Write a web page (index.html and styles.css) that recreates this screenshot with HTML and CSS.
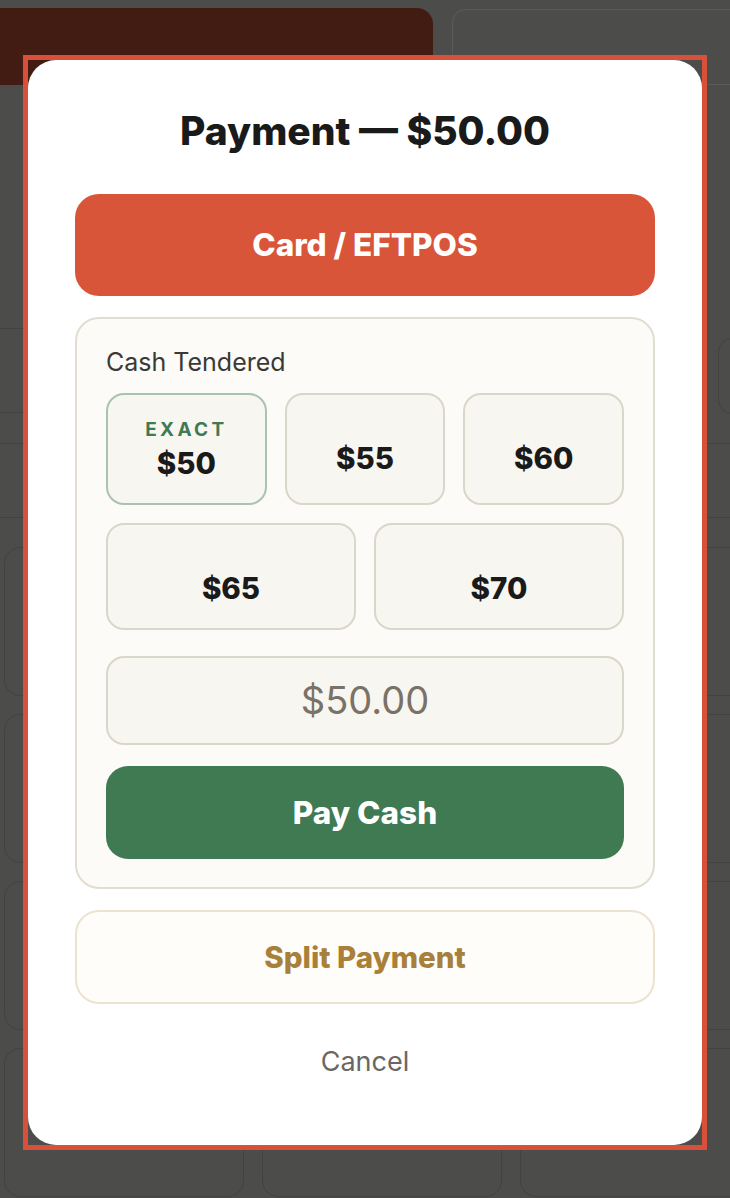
FILE: index.html
```html
<!DOCTYPE html>
<html lang="en">
<head>
  <meta charset="UTF-8">
  <title>POS - Payment</title>
  <link rel="stylesheet" href="styles.css">
</head>
<body>

  <div class="page">
    <div class="header">
      <div class="tab active"></div>
      <div class="tab"></div>
    </div>

    <div class="search-row">
      <div class="search"></div>
      <div class="pill"></div>
    </div>

    <div class="strip"></div>

    <div class="products">
      <div class="product"></div><div class="product"></div><div class="product"></div>
      <div class="product"></div><div class="product"></div><div class="product"></div>
      <div class="product"></div><div class="product"></div><div class="product"></div>
      <div class="product"></div><div class="product"></div><div class="product"></div>
    </div>
  </div>

  <div class="overlay">
    <div class="frame">
      <div class="modal">
        <h2>Payment — $50.00</h2>

        <button class="btn card">Card / EFTPOS</button>

        <div class="cash">
          <div class="cash-label">Cash Tendered</div>

          <div class="tenders three">
            <button class="tender exact"><span class="tag">EXACT</span><span class="amt">$50</span></button>
            <button class="tender"><span class="tag"></span><span class="amt">$55</span></button>
            <button class="tender"><span class="tag"></span><span class="amt">$60</span></button>
          </div>

          <div class="tenders two">
            <button class="tender"><span class="tag"></span><span class="amt">$65</span></button>
            <button class="tender"><span class="tag"></span><span class="amt">$70</span></button>
          </div>

          <input class="cash-input" type="text" placeholder="$50.00">

          <button class="btn pay">Pay Cash</button>
        </div>

        <button class="btn split">Split Payment</button>

        <button class="cancel">Cancel</button>
      </div>
    </div>
  </div>

</body>
</html>
```

FILE: styles.css
```css
body {
  margin: 0;
  background: #4c4c4a;
  font-family: Inter, "Liberation Sans", sans-serif;
  overflow: hidden;
  height: 1198px;
}

/* page behind the dialog (dimmed) */

.page {
  height: 1198px;
  overflow: hidden;
}

.header {
  display: flex;
  gap: 19px;
  padding-top: 8px;
  height: 77px;
}

.tab {
  flex: 1;
  margin-top: 1px;
  border: 1.5px solid #5a5a58;
  border-right: none;
  border-radius: 14px 0 0 0;
}

.tab.active {
  flex: none;
  width: 433px;
  margin-top: 0;
  border: none;
  border-radius: 0 16px 0 0;
  background: #421b13;
}

.search-row {
  display: flex;
  gap: 12px;
  margin-top: 243px;
  height: 85px;
}

.search {
  flex: 1;
  margin-left: -20px;
  border: 1.5px solid #424240;
  border-radius: 14px;
}

.pill {
  width: 100px;
  margin-top: 10px;
  height: 74px;
  border: 1.5px solid #424240;
  border-radius: 14px;
  margin-right: -90px;
}

.strip {
  margin-top: 30px;
  height: 73px;
  border-top: 1.5px solid #424240;
  border-bottom: 1.5px solid #424240;
}

.products {
  display: grid;
  grid-template-columns: repeat(3, 240px);
  gap: 18px;
  margin-top: 29px;
  padding-left: 4px;
}

.product {
  height: 147px;
  border: 1.5px solid #424240;
  border-radius: 16px;
}

/* dialog */

.overlay {
  position: fixed;
  inset: 0;
  display: flex;
  align-items: center;
  justify-content: center;
  padding-top: 6px;
}

.frame {
  border: 5px solid #d9503a;
}

.modal {
  width: 580px;
  padding: 49px 47px 67px;
  background: #fff;
  border-radius: 28px;
  display: flex;
  flex-direction: column;
}

.modal h2 {
  margin: 0 0 41px;
  font-size: 39px;
  line-height: 44px;
  font-weight: 800;
  color: #1a1a1a;
  text-align: center;
}

button {
  font-family: inherit;
  cursor: pointer;
}

.btn {
  width: 100%;
  border: none;
  border-radius: 24px;
  font-weight: 800;
}

.btn.card {
  height: 102px;
  background: #d9553a;
  color: #fff;
  font-size: 31.5px;
}

.cash {
  margin-top: 21px;
  padding: 28px 29px;
  background: #fcfbf7;
  border: 2px solid #e2ddd1;
  border-radius: 24px;
}

.cash-label {
  font-size: 25px;
  line-height: 30px;
  color: #3b3936;
  margin-bottom: 16px;
}

.tenders {
  display: grid;
  gap: 18px;
}

.tenders.three {
  grid-template-columns: repeat(3, 1fr);
  margin-bottom: 18px;
}

.tenders.two {
  grid-template-columns: repeat(2, 1fr);
  margin-bottom: 26px;
}

.tender {
  display: flex;
  flex-direction: column;
  align-items: center;
  padding: 24px 0 23px;
  background: #f8f6f1;
  border: 2px solid #dbd6ca;
  border-radius: 18px;
}

.tender.exact {
  border-color: #aac2b0;
}

.tag {
  height: 22px;
  font-size: 19px;
  line-height: 22px;
  font-weight: 700;
  letter-spacing: 3.3px;
  color: #3f7a53;
}

.exact .tag {
  margin-bottom: 5px;
}

.amt {
  font-size: 29.5px;
  line-height: 34px;
  font-weight: 800;
  color: #1a1a1a;
}

.cash-input {
  display: block;
  box-sizing: border-box;
  width: 100%;
  height: 89px;
  margin-bottom: 21px;
  background: #f8f6f1;
  border: 2px solid #dbd6ca;
  border-radius: 18px;
  font-family: inherit;
  font-size: 38px;
  text-align: center;
  color: #1a1a1a;
}

.cash-input::placeholder {
  color: #7a7266;
}

.btn.pay {
  height: 93px;
  background: #3f7a53;
  color: #fff;
  font-size: 31.5px;
  border-radius: 22px;
}

.btn.split {
  margin-top: 21px;
  height: 94px;
  background: #fffdf9;
  border: 2px solid #ebe3d0;
  color: #a8803a;
  font-size: 29.5px;
}

.cancel {
  margin-top: 42px;
  padding: 0;
  border: none;
  background: none;
  font-size: 27px;
  line-height: 32px;
  color: #6b6663;
}
```
